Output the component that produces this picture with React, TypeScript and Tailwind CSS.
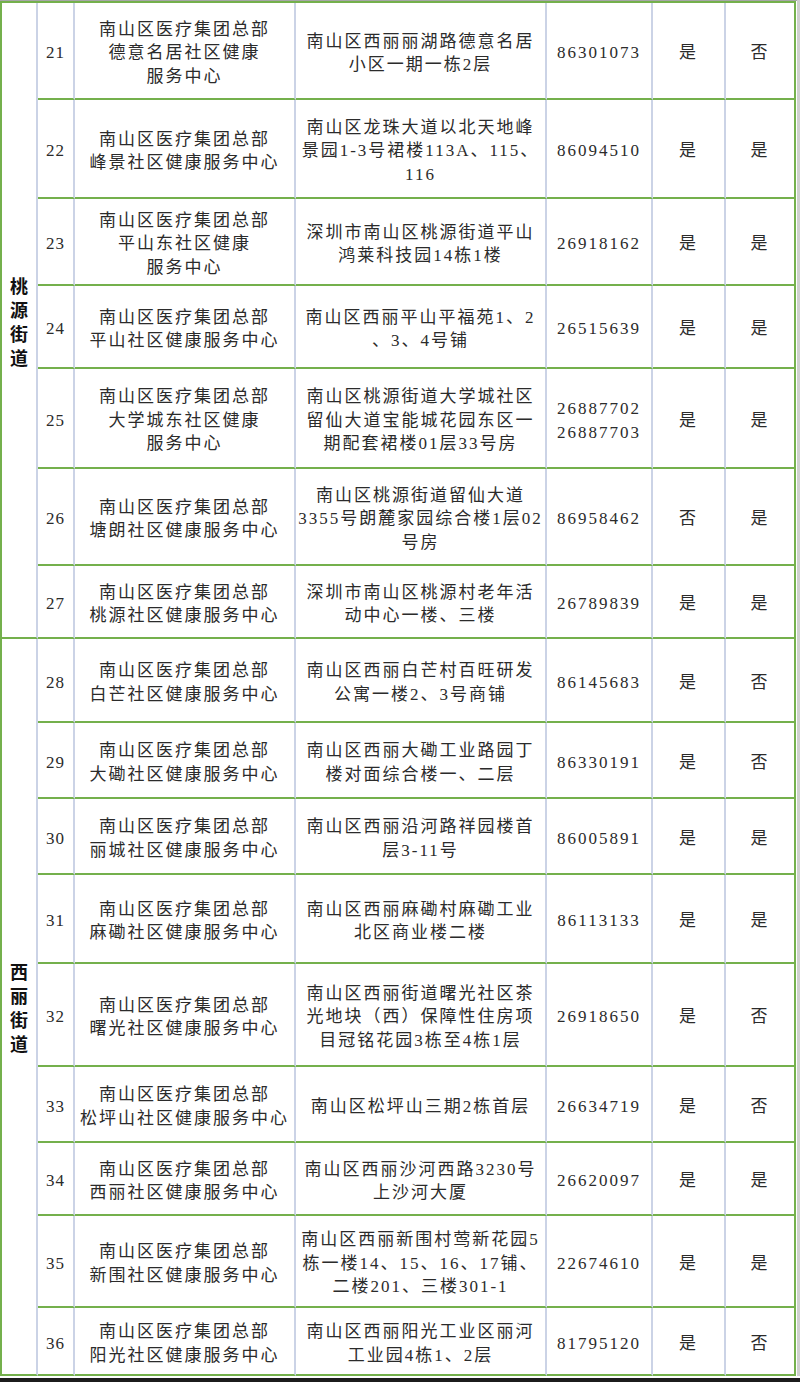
import React from "react";

type Row = {
  no: string;
  name: string[];
  addr: string[];
  phone: string[];
  a: string;
  b: string;
};

const rows: Row[] = [
  { no: "21", name: ["南山区医疗集团总部", "德意名居社区健康", "服务中心"], addr: ["南山区西丽丽湖路德意名居", "小区一期一栋2层"], phone: ["86301073"], a: "是", b: "否" },
  { no: "22", name: ["南山区医疗集团总部", "峰景社区健康服务中心"], addr: ["南山区龙珠大道以北天地峰", "景园1-3号裙楼113A、115、", "116"], phone: ["86094510"], a: "是", b: "是" },
  { no: "23", name: ["南山区医疗集团总部", "平山东社区健康", "服务中心"], addr: ["深圳市南山区桃源街道平山", "鸿莱科技园14栋1楼"], phone: ["26918162"], a: "是", b: "是" },
  { no: "24", name: ["南山区医疗集团总部", "平山社区健康服务中心"], addr: ["南山区西丽平山平福苑1、2", "、3、4号铺"], phone: ["26515639"], a: "是", b: "是" },
  { no: "25", name: ["南山区医疗集团总部", "大学城东社区健康", "服务中心"], addr: ["南山区桃源街道大学城社区", "留仙大道宝能城花园东区一", "期配套裙楼01层33号房"], phone: ["26887702", "26887703"], a: "是", b: "是" },
  { no: "26", name: ["南山区医疗集团总部", "塘朗社区健康服务中心"], addr: ["南山区桃源街道留仙大道", "3355号朗麓家园综合楼1层02", "号房"], phone: ["86958462"], a: "否", b: "是" },
  { no: "27", name: ["南山区医疗集团总部", "桃源社区健康服务中心"], addr: ["深圳市南山区桃源村老年活", "动中心一楼、三楼"], phone: ["26789839"], a: "是", b: "是" },
  { no: "28", name: ["南山区医疗集团总部", "白芒社区健康服务中心"], addr: ["南山区西丽白芒村百旺研发", "公寓一楼2、3号商铺"], phone: ["86145683"], a: "是", b: "否" },
  { no: "29", name: ["南山区医疗集团总部", "大磡社区健康服务中心"], addr: ["南山区西丽大磡工业路园丁", "楼对面综合楼一、二层"], phone: ["86330191"], a: "是", b: "否" },
  { no: "30", name: ["南山区医疗集团总部", "丽城社区健康服务中心"], addr: ["南山区西丽沿河路祥园楼首", "层3-11号"], phone: ["86005891"], a: "是", b: "是" },
  { no: "31", name: ["南山区医疗集团总部", "麻磡社区健康服务中心"], addr: ["南山区西丽麻磡村麻磡工业", "北区商业楼二楼"], phone: ["86113133"], a: "是", b: "是" },
  { no: "32", name: ["南山区医疗集团总部", "曙光社区健康服务中心"], addr: ["南山区西丽街道曙光社区茶", "光地块（西）保障性住房项", "目冠铭花园3栋至4栋1层"], phone: ["26918650"], a: "是", b: "否" },
  { no: "33", name: ["南山区医疗集团总部", "松坪山社区健康服务中心"], addr: ["南山区松坪山三期2栋首层"], phone: ["26634719"], a: "是", b: "否" },
  { no: "34", name: ["南山区医疗集团总部", "西丽社区健康服务中心"], addr: ["南山区西丽沙河西路3230号", "上沙河大厦"], phone: ["26620097"], a: "是", b: "是" },
  { no: "35", name: ["南山区医疗集团总部", "新围社区健康服务中心"], addr: ["南山区西丽新围村莺新花园5", "栋一楼14、15、16、17铺、", "二楼201、三楼301-1"], phone: ["22674610"], a: "是", b: "是" },
  { no: "36", name: ["南山区医疗集团总部", "阳光社区健康服务中心"], addr: ["南山区西丽阳光工业区丽河", "工业园4栋1、2层"], phone: ["81795120"], a: "是", b: "否" },
];

const cell =
  "flex flex-col items-center justify-center text-center whitespace-nowrap pt-[5px] border-r-2 border-b-2 border-r-[#cbd3e6] border-b-[#74b04c]";
const lastCell =
  "flex flex-col items-center justify-center text-center whitespace-nowrap pt-[5px] border-b-2 border-b-[#74b04c]";

function Lines({ lines }: { lines: string[] }) {
  return (
    <>
      {lines.map((l, i) => (
        <div key={i}>{l}</div>
      ))}
    </>
  );
}

function District({ chars, span }: { chars: string[]; span: "a" | "b" }) {
  return (
    <div
      className={
        (span === "a" ? "row-span-7 " : "row-span-9 ") +
        "col-start-1 flex flex-col items-center justify-center pt-[5px] border-r-2 border-b-2 border-r-[#cbd3e6] border-b-[#74b04c] text-[18px] leading-[24px] font-bold text-[#111] tracking-normal"
      }
    >
      {chars.map((c, i) => (
        <div key={i}>{c}</div>
      ))}
    </div>
  );
}

export default function App() {
  return (
    <div className="w-[800px] h-[1382px] bg-white flex flex-col overflow-hidden">
      <div className="flex">
        <div className="w-[797px] flex flex-col">
          <div className="h-px bg-[#a6a6a6]" />
          <div className="w-[796px] border-2 border-b-0 border-[#74b04c] grid grid-cols-[36px_37px_221px_251px_106px_73px_68px] grid-rows-[97px_99px_87px_83px_100px_97px_73px_84px_76px_76px_89px_103px_76px_73px_92px_68px] font-['Liberation_Serif','Noto_Sans_CJK_SC',serif] text-[17px] leading-[23.5px] tracking-[2px] text-[#2b2b2b]">
            {rows.map((r, idx) => (
              <React.Fragment key={r.no}>
                {idx === 0 && <District chars={["桃", "源", "街", "道"]} span="a" />}
                {idx === 7 && <District chars={["西", "丽", "街", "道"]} span="b" />}
                <div className={cell + " tracking-[1px]"}>{r.no}</div>
                <div className={cell}>
                  <Lines lines={r.name} />
                </div>
                <div className={cell}>
                  <Lines lines={r.addr} />
                </div>
                <div className={cell}>
                  <Lines lines={r.phone} />
                </div>
                <div className={cell}>{r.a}</div>
                <div className={lastCell}>{r.b}</div>
              </React.Fragment>
            ))}
          </div>
        </div>
        <div className="w-[3px] bg-[#cfcfcf]" />
      </div>
      <div className="h-[2px] bg-white" />
      <div className="h-[4px] bg-[#1c1c1c]" />
    </div>
  );
}
